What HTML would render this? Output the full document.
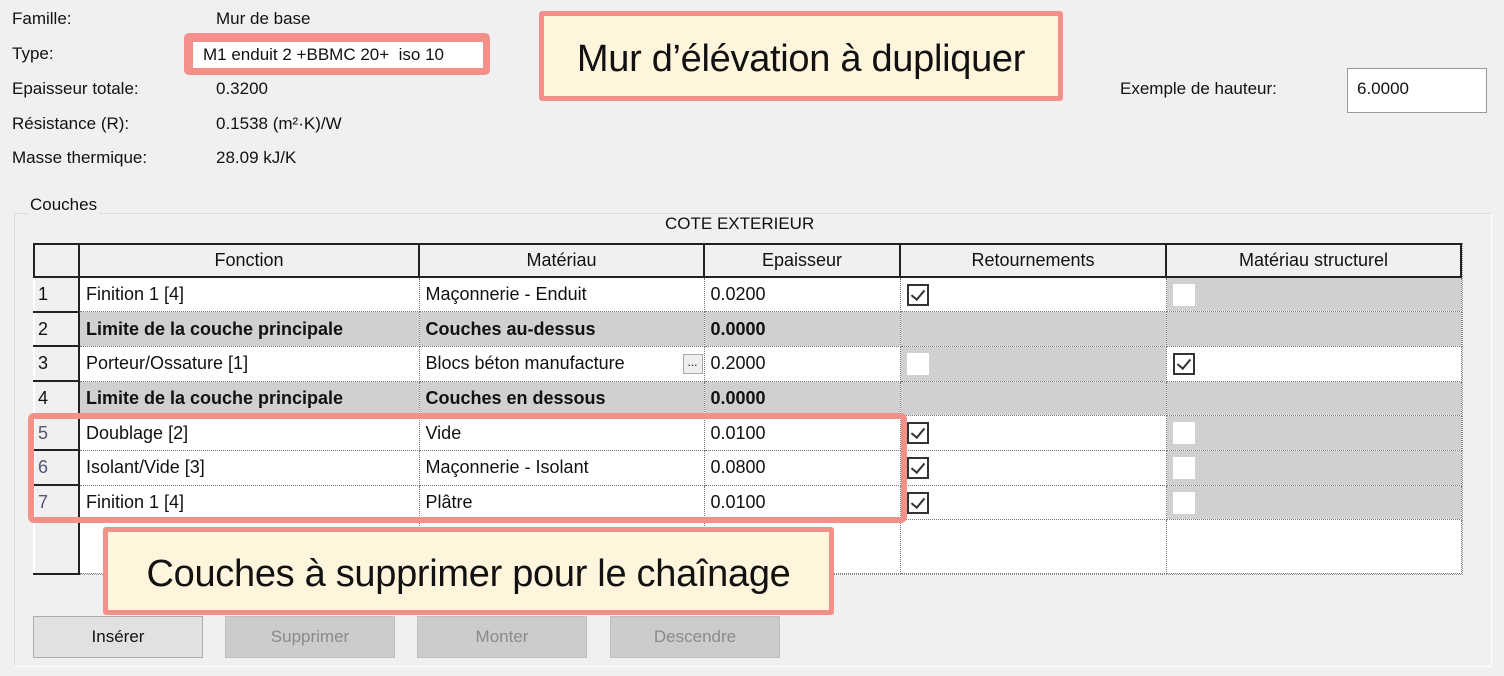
<!DOCTYPE html>
<html><head><meta charset="utf-8"><style>
*{margin:0;padding:0;box-sizing:border-box}
body{width:1504px;height:676px;background:#f0f0f0;position:relative;overflow:hidden;font-family:"Liberation Sans","DejaVu Sans",sans-serif;font-size:17px;color:#111}
.a{position:absolute;white-space:nowrap}
.lbl{line-height:20px}
table{border-collapse:collapse;position:absolute;left:33px;top:243px;table-layout:fixed}
td,th{height:34.7px;padding:0 6px;font-weight:normal;border:1px dotted #777;white-space:nowrap;overflow:hidden;font-size:18px}
th{background:#f0f0f0;border:2px solid #222;text-align:center;height:33px}
td.n{background:#f0f0f0;border:2px solid #222;border-top-color:#fff;border-left-color:#fff;padding-left:3px}
td.g{background:#d0d0d0}
tr.b td{font-weight:bold}
.cb{display:inline-block;width:22px;height:22px;vertical-align:middle;background:#fff;position:relative}
.cb.c{border:2px solid #333}
.cb.c::after{content:"";position:absolute;left:5px;top:1px;width:6px;height:11px;border:solid #333;border-width:0 2px 2px 0;transform:rotate(40deg)}
.btn{position:absolute;top:616px;height:42px;width:170px;border:1px solid #adadad;background:#e1e1e1;text-align:center;line-height:40px;font-size:17px}
.dis{background:#cccccc;color:#8a8a8a;border-color:#bfbfbf}
.callout{position:absolute;background:#fff5dc;border:5px solid #f4908a;border-radius:3px;font-size:38px;color:#111;text-align:center;letter-spacing:-0.3px}
</style></head><body>
<div class="a lbl" style="left:12px;top:9px">Famille:</div>
<div class="a lbl" style="left:12px;top:44px">Type:</div>
<div class="a lbl" style="left:12px;top:79px">Epaisseur totale:</div>
<div class="a lbl" style="left:12px;top:114px">Résistance (R):</div>
<div class="a lbl" style="left:12px;top:148px">Masse thermique:</div>
<div class="a lbl" style="left:216px;top:9px">Mur de base</div>
<div class="a" style="left:184px;top:33px;width:306px;height:42px;background:#f4908a;border-radius:5px"></div>
<div class="a lbl" style="left:193px;top:42px;width:290px;height:26px;background:#fff;padding:3px 0 0 10px">M1 enduit 2 +BBMC 20+ &nbsp;iso 10</div>
<div class="a lbl" style="left:216px;top:79px">0.3200</div>
<div class="a lbl" style="left:216px;top:114px">0.1538 (m²·K)/W</div>
<div class="a lbl" style="left:216px;top:148px">28.09 kJ/K</div>
<div class="callout" style="left:539px;top:11px;width:524px;height:90px;line-height:86px">Mur d’élévation à dupliquer</div>
<div class="a lbl" style="left:1120px;top:79px">Exemple de hauteur:</div>
<div class="a lbl" style="left:1347px;top:68px;width:140px;height:45px;background:#fff;border:1px solid #999;padding:10px 0 0 9px">6.0000</div>

<div class="a" style="left:14px;top:213px;width:1478px;height:454px;border:1px solid #dcdcdc;border-right-color:#fff;border-bottom-color:#fff"></div>
<div class="a lbl" style="left:28px;top:195px;background:#f0f0f0;padding:0 2px">Couches</div>
<div class="a lbl" style="left:665px;top:214px">COTE EXTERIEUR</div>

<div class="a" style="left:33px;top:243px;width:1430px;height:332px;background:#fff;border:1px dotted #888"></div>
<table>
<colgroup><col style="width:45px"><col style="width:340px"><col style="width:285px"><col style="width:196px"><col style="width:266px"><col style="width:295px"></colgroup>
<tr><th></th><th>Fonction</th><th>Matériau</th><th>Epaisseur</th><th>Retournements</th><th>Matériau structurel</th></tr>
<tr><td class="n">1</td><td>Finition 1 [4]</td><td>Maçonnerie - Enduit</td><td>0.0200</td><td><span class="cb c"></span></td><td class="g"><span class="cb"></span></td></tr>
<tr class="b"><td class="n" style="font-weight:normal">2</td><td class="g">Limite de la couche principale</td><td class="g">Couches au-dessus</td><td class="g">0.0000</td><td class="g"></td><td class="g"></td></tr>
<tr><td class="n">3</td><td style="position:relative">Porteur/Ossature [1]</td><td style="position:relative">Blocs béton manufacture<span style="position:absolute;right:1px;top:7px;width:20px;height:20px;border:1px solid #aaa;background:#eee;font-size:12px;line-height:14px;text-align:center">...</span></td><td>0.2000</td><td class="g"><span class="cb"></span></td><td><span class="cb c"></span></td></tr>
<tr class="b"><td class="n" style="font-weight:normal">4</td><td class="g">Limite de la couche principale</td><td class="g">Couches en dessous</td><td class="g">0.0000</td><td class="g"></td><td class="g"></td></tr>
<tr><td class="n" style="color:#557">5</td><td>Doublage [2]</td><td>Vide</td><td>0.0100</td><td><span class="cb c"></span></td><td class="g"><span class="cb"></span></td></tr>
<tr><td class="n" style="color:#557">6</td><td>Isolant/Vide [3]</td><td>Maçonnerie - Isolant</td><td>0.0800</td><td><span class="cb c"></span></td><td class="g"><span class="cb"></span></td></tr>
<tr><td class="n" style="color:#557">7</td><td>Finition 1 [4]</td><td>Plâtre</td><td>0.0100</td><td><span class="cb c"></span></td><td class="g"><span class="cb"></span></td></tr>
<tr><td class="n" style="height:54px"></td><td></td><td></td><td></td><td></td><td></td></tr>
</table>
<div class="a" style="left:28px;top:413px;width:879px;height:110px;border:6px solid #f4908a;border-radius:6px"></div>
<div class="callout" style="left:103px;top:527px;width:731px;height:88px;line-height:84px">Couches à supprimer pour le chaînage</div>

<div class="btn" style="left:33px">Insérer</div>
<div class="btn dis" style="left:225px">Supprimer</div>
<div class="btn dis" style="left:417px">Monter</div>
<div class="btn dis" style="left:610px">Descendre</div>
</body></html>
